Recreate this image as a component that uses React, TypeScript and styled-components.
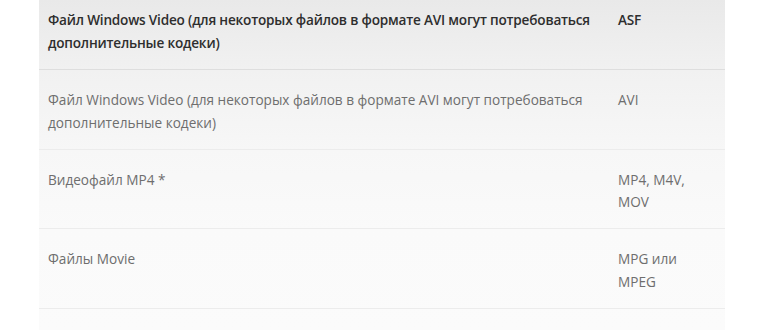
import React from 'react';
import styled, { createGlobalStyle } from 'styled-components';

const rows = [
    { name: 'Файл Windows Video (для некоторых файлов в формате AVI могут потребоваться дополнительные кодеки)', ext: 'AVI' },
    { name: 'Видеофайл MP4 *', ext: 'MP4, M4V, MOV' },
    { name: 'Файлы Movie', ext: 'MPG или MPEG' },
    { name: '', ext: '' },
];

function App() {
    return <>
        <GlobalStyle />
        <Page>
            <Table>
                <Row header>
                    <Cell header>Файл Windows Video (для некоторых файлов в формате AVI могут потребоваться дополнительные кодеки)</Cell>
                    <Cell header ext>ASF</Cell>
                </Row>
                {rows.map((row, index) => (
                    <Row key={index}>
                        <Cell>{row.name}</Cell>
                        <Cell ext>{row.ext}</Cell>
                    </Row>
                ))}
            </Table>
        </Page>
    </>
}

export default App;

const GlobalStyle = createGlobalStyle`
    body {
        margin: 0;
        background: #ffffff;
        font-family: 'Open Sans', 'Noto Sans', sans-serif;
    }
`

const Page = styled.div`
    width: 770px;
    height: 330px;
    overflow: hidden;
    padding: 0 45px 0 39px;
    box-sizing: border-box;
`

const Table = styled.div`
    display: flex;
    flex-direction: column;
    background: linear-gradient(180deg, #e9e9e9 0px, #f1f1f1 70px, #f7f7f7 150px, #fafafa 230px, #fbfbfb 330px);
`

const Row = styled.div<{ header?: boolean }>`
    display: grid;
    grid-template-columns: 575px 1fr;
    padding: ${props => props.header ? '9px 0 15px' : '19px 0 14.5px'};
    min-height: 45px;
    border-bottom: 1px solid ${props => props.header ? '#dedede' : '#ececec'};
`

const Cell = styled.div<{ header?: boolean; ext?: boolean }>`
    padding: ${props => props.ext ? '0 28px 0 4px' : '0 8px 0 9px'};
    font-size: 13.6px;
    line-height: 22.5px;
    font-weight: ${props => props.header ? 600 : 400};
    letter-spacing: ${props => props.header ? '-0.2px' : '0'};
    color: ${props => props.header ? '#2e2e2e' : '#6e6e6e'};
`
